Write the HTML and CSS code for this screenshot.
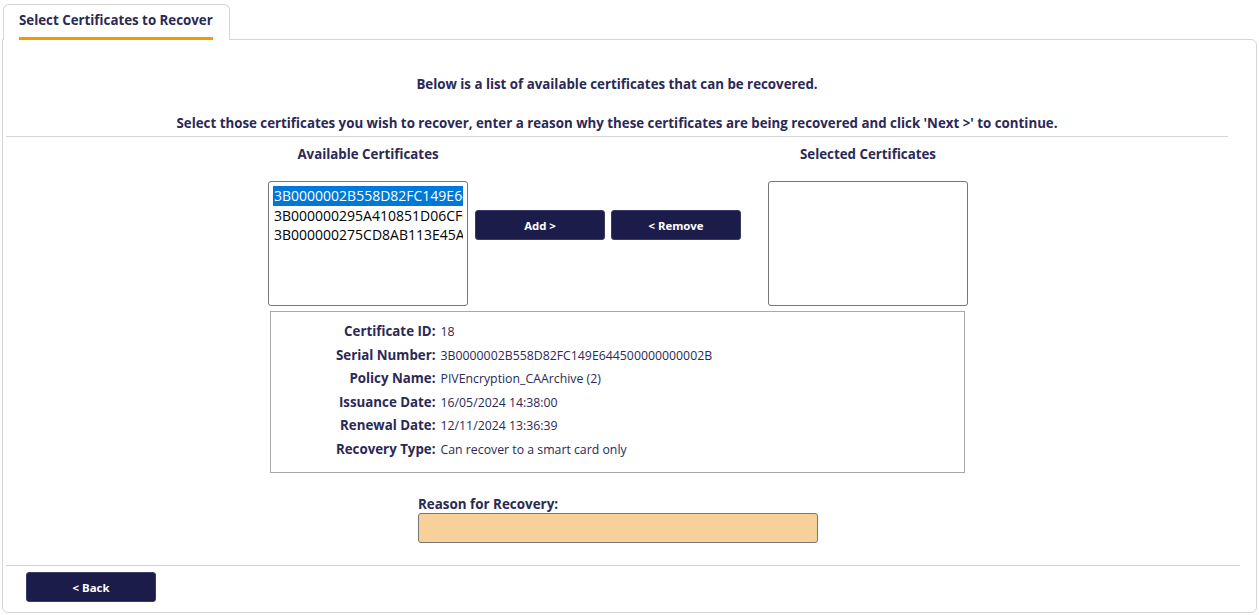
FILE: index.html
```html
<!DOCTYPE html>
<html>
<head>
<meta charset="utf-8">
<link rel="stylesheet" href="styles.css">
</head>
<body>
<div class="tabs">
  <div class="tab"><span class="tab-label">Select Certificates to Recover</span></div>
</div>
<div class="card">
  <div class="content">
    <p class="intro intro-1">Below is a list of available certificates that can be recovered.</p>
    <p class="intro intro-2">Select those certificates you wish to recover, enter a reason why these certificates are being recovered and click 'Next &gt;' to continue.</p>
    <hr class="rule">
    <div class="picker">
      <div class="col col-left">
        <div class="col-title">Available Certificates</div>
        <div class="listbox">
          <div class="item selected">3B0000002B558D82FC149E644500000000002B</div>
          <div class="item">3B000000295A410851D06CF0B000000000029</div>
          <div class="item">3B000000275CD8AB113E45A00000000000027</div>
        </div>
      </div>
      <div class="actions">
        <button class="btn">Add &gt;</button>
        <button class="btn">&lt; Remove</button>
      </div>
      <div class="col col-right">
        <div class="col-title">Selected Certificates</div>
        <div class="listbox"></div>
      </div>
    </div>
    <div class="details">
      <div class="label">Certificate ID:</div><div class="value">18</div>
      <div class="label">Serial Number:</div><div class="value">3B0000002B558D82FC149E644500000000002B</div>
      <div class="label">Policy Name:</div><div class="value">PIVEncryption_CAArchive (2)</div>
      <div class="label">Issuance Date:</div><div class="value">16/05/2024 14:38:00</div>
      <div class="label">Renewal Date:</div><div class="value">12/11/2024 13:36:39</div>
      <div class="label">Recovery Type:</div><div class="value">Can recover to a smart card only</div>
    </div>
    <div class="reason">
      <label class="reason-label">Reason for Recovery:</label>
      <input class="reason-input" type="text">
    </div>
  </div>
  <div class="footer">
    <button class="btn btn-back">&lt; Back</button>
  </div>
</div>
</body>
</html>
```
FILE: styles.css
```css
* { box-sizing: border-box; }
html, body { margin: 0; padding: 0; background: #fff; }
body {
  font-family: "Open Sans", Lato, "Liberation Sans", sans-serif;
  color: #2b2955;
  width: 1259px;
  height: 615px;
  overflow: hidden;
}
.tabs {
  padding: 4px 0 0 3px;
  display: flex;
}
.tab {
  position: relative;
  z-index: 1;
  width: 227px;
  height: 36px;
  margin-bottom: -1px;
  background: #fff;
  border: 1px solid #d3d6d9;
  border-bottom: none;
  border-radius: 6px 6px 0 0;
  padding: 3px 0 0 15px;
}
.tab-label {
  display: inline-block;
  font-size: 13.3px;
  font-weight: 700;
  line-height: 18px;
  padding-bottom: 8px;
  border-bottom: 3px solid #f39a00;
}
.card {
  margin: 0 2px 0 2px;
  height: 574px;
  border: 1px solid #d3d6d9;
  border-radius: 0 6px 6px 6px;
  display: flex;
  flex-direction: column;
}
.content {
  margin: 0 28px 0 3px;
  flex: 1;
}
.intro {
  margin: 0;
  text-align: center;
  font-size: 13.3px;
  font-weight: 700;
  line-height: 18px;
}
.intro-1 { padding-top: 35px; }
.intro-2 { padding-top: 21px; }
.rule {
  margin: 4px 0 0 0;
  border: none;
  border-top: 1px solid #d3d6d9;
  height: 0;
}
.picker {
  display: flex;
  justify-content: center;
  align-items: flex-start;
  padding-left: 2px;
  margin-top: 8px;
}
.col { width: 200px; }
.col-title {
  text-align: center;
  font-size: 13.3px;
  font-weight: 700;
  line-height: 18px;
  height: 36px;
}
.listbox {
  height: 125px;
  border: 1px solid #767676;
  border-radius: 3px;
  padding: 4px;
  overflow: hidden;
  background: #fff;
}
.item {
  font-size: 14px;
  line-height: 19.5px;
  color: #000;
  white-space: nowrap;
  overflow: hidden;
  padding-left: 1px;
}
.item.selected {
  background: #0078d7;
  color: #fff;
}
.actions {
  display: flex;
  gap: 6px;
  margin: 65px 27px 0 7px;
}
.btn {
  width: 130px;
  height: 30px;
  background: #1c1c4b;
  color: #fff;
  border: 1px solid #3a3a66;
  border-radius: 3px;
  font-family: "Open Sans", Lato, "Liberation Sans", sans-serif;
  font-size: 11.4px;
  font-weight: 700;
  line-height: 15px;
  padding: 0;
}
.details {
  width: 695px;
  margin: 5px auto 0;
  border: 1px solid #a9a9a9;
  padding: 8px 0 10px;
  display: grid;
  grid-template-columns: 165px 1fr;
  column-gap: 5px;
}
.label, .value {
  line-height: 23.6px;
  height: 23.6px;
}
.label {
  text-align: right;
  font-size: 13.3px;
  font-weight: 700;
}
.value {
  font-size: 12.3px;
}
.reason {
  width: 402px;
  padding-left: 2px;
  margin: 23px auto 0;
  display: flex;
  flex-direction: column;
}
.reason-label {
  font-size: 13.4px;
  font-weight: 700;
  line-height: 16px;
}
.reason-input {
  margin-top: 1px;
  height: 30px;
  background: #f8d19a;
  border: 1px solid #767676;
  border-radius: 3px;
}
.footer {
  margin: 0 16px 0 3px;
  border-top: 1px solid #d3d6d9;
  padding: 6px 0 10px 20px;
}
.btn-back { display: block; }
```
